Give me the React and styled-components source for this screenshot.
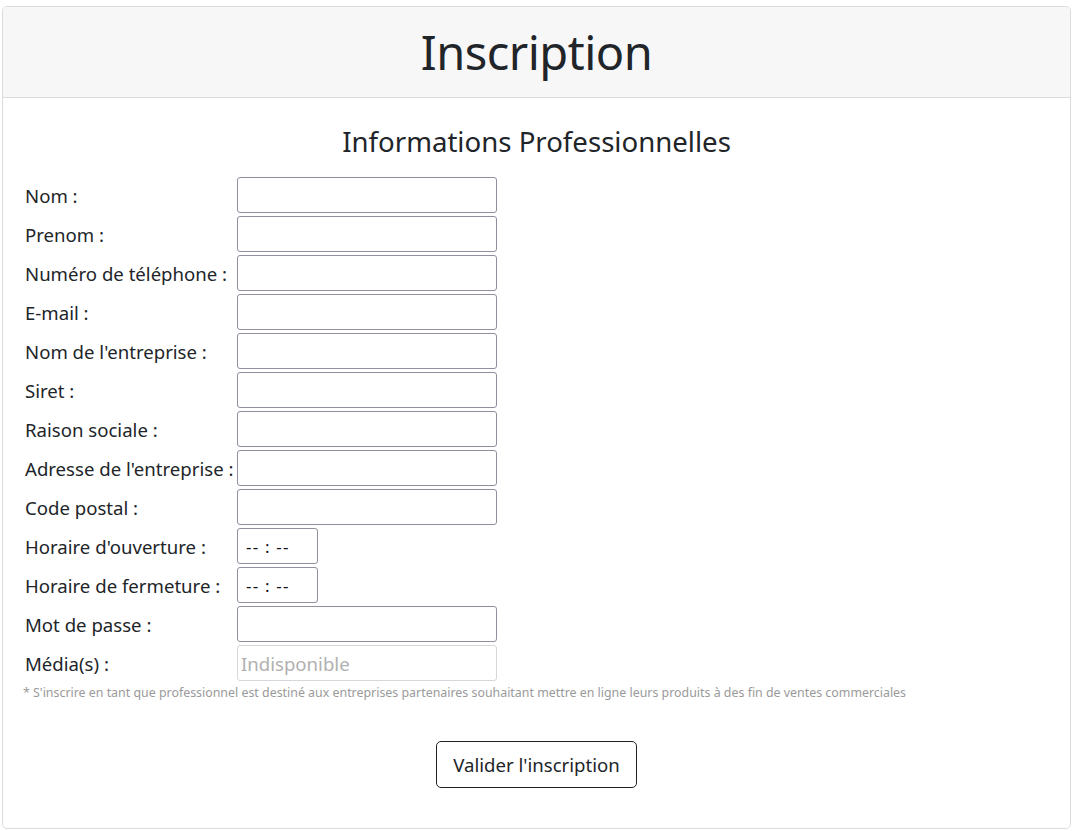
import React from "react"
import styled, { createGlobalStyle } from "styled-components"

const GlobalStyles = createGlobalStyle`
  html, body {
    margin: 0;
    padding: 0;
    background: #fff;
  }
  body {
    font-family: "Noto Sans", "Open Sans", sans-serif;
    color: #212529;
  }
`

const Page = styled.div`
  padding: 6px 2px 2px 2px;
`

const Card = styled.div`
  border: 1px solid #dcdcdc;
  border-radius: 5px;
  overflow: hidden;
  background: #fff;
`

const CardHeader = styled.div`
  background: #f7f7f7;
  border-bottom: 1px solid #dcdcdc;
  height: 90px;
  display: flex;
  align-items: center;
  justify-content: center;
`

const Title = styled.h1`
  margin: 0;
  font-size: 47px;
  font-weight: 400;
  letter-spacing: -0.5px;
  line-height: 1;
`

const CardBody = styled.div`
  padding: 27px 20px 40px 20px;
  display: flex;
  flex-direction: column;
`

const SubTitle = styled.h2`
  margin: 0 0 19px 0;
  text-align: center;
  font-size: 27.6px;
  font-weight: 400;
  line-height: 1.2;
`

const Form = styled.div`
  display: grid;
  grid-template-columns: 212px auto;
  row-gap: 3px;
  justify-content: start;
  padding-left: 2px;
`

const Label = styled.label`
  box-sizing: border-box;
  font-size: 18.6px;
  display: flex;
  align-items: center;
  white-space: nowrap;
  height: 36px;
  padding-top: 1px;
`

const Input = styled.input`
  box-sizing: border-box;
  width: ${(p) => (p.$short ? "81px" : "260px")};
  height: 36px;
  border: 1px solid ${(p) => (p.disabled ? "#d6d6dc" : "#8f8f9d")};
  border-radius: 3px;
  background: #fff;
  font-family: "Noto Sans", "Open Sans", sans-serif;
  font-size: ${(p) => (p.$short ? "17px" : "18.6px")};
  letter-spacing: ${(p) => (p.$short ? "1.2px" : "0")};
  color: #111;
  padding: 0 0 0 ${(p) => (p.$short ? "8px" : "3px")};
  margin: 0;

  &::placeholder {
    color: #b0b0b0;
  }
`

const Note = styled.p`
  margin: 3px 0 0 0;
  font-size: 12.4px;
  line-height: 17px;
  color: #9a9a9a;
`

const Actions = styled.div`
  display: flex;
  justify-content: center;
  margin-top: 40px;
`

const Button = styled.button`
  box-sizing: border-box;
  height: 47px;
  padding: 0 16px;
  background: #fff;
  border: 1px solid #222;
  border-radius: 5px;
  font-family: "Noto Sans", "Open Sans", sans-serif;
  font-size: 18.6px;
  color: #212529;
  cursor: pointer;
`

const fields = [
  { label: "Nom :" },
  { label: "Prenom :" },
  { label: "Numéro de téléphone :" },
  { label: "E-mail :" },
  { label: "Nom de l'entreprise :" },
  { label: "Siret :" },
  { label: "Raison sociale :" },
  { label: "Adresse de l'entreprise :" },
  { label: "Code postal :" },
  { label: "Horaire d'ouverture :", time: true },
  { label: "Horaire de fermeture :", time: true },
  { label: "Mot de passe :", type: "password" },
  { label: "Média(s) :", disabled: true },
]

const App = () => (
  <Page>
    <GlobalStyles />
    <Card>
      <CardHeader>
        <Title>Inscription</Title>
      </CardHeader>
      <CardBody>
        <SubTitle>Informations Professionnelles</SubTitle>
        <Form>
          {fields.map((f) => (
            <React.Fragment key={f.label}>
              <Label>{f.label}</Label>
              {f.time ? (
                <Input $short readOnly defaultValue="-- : --" />
              ) : f.disabled ? (
                <Input disabled placeholder="Indisponible" />
              ) : (
                <Input type={f.type || "text"} />
              )}
            </React.Fragment>
          ))}
        </Form>
        <Note>
          * S'inscrire en tant que professionnel est destiné aux entreprises
          partenaires souhaitant mettre en ligne leurs produits à des fin de
          ventes commerciales
        </Note>
        <Actions>
          <Button>Valider l'inscription</Button>
        </Actions>
      </CardBody>
    </Card>
  </Page>
)

export default App
